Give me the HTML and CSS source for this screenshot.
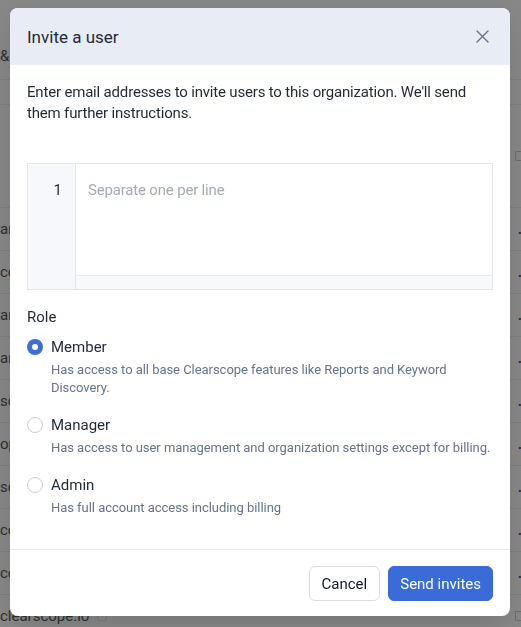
FILE: index.html
```html
<!DOCTYPE html>
<html lang="en">
<head>
<meta charset="utf-8">
<title>Invite a user</title>
<link rel="stylesheet" href="styles.css">
</head>
<body>
<div class="page">
  <div class="bg-head"><span class="frag">&amp;</span></div>
  <div class="bg-sub"></div>
  <div class="bg-gap"><span class="box"></span></div>
  <div class="bg-row first"></div>
  <div class="bg-row"><span class="frag">ar</span><span class="dot">.</span></div>
  <div class="bg-row"><span class="frag">co</span><span class="dot">.</span></div>
  <div class="bg-row"><span class="frag">ar</span><span class="dot">.</span></div>
  <div class="bg-row"><span class="frag">ar</span><span class="dot">.</span></div>
  <div class="bg-row"><span class="frag">sc</span><span class="dot">.</span></div>
  <div class="bg-row"><span class="frag">op</span><span class="dot">.</span></div>
  <div class="bg-row"><span class="frag">sc</span><span class="dot">.</span></div>
  <div class="bg-row"><span class="frag">co</span><span class="dot">.</span></div>
  <div class="bg-row"><span class="frag">co</span><span class="dot">.</span></div>
  <div class="bg-row"><span class="frag">clearscope.io <span class="cb"></span></span><span class="box"></span></div>
</div>

<div class="modal" role="dialog" aria-labelledby="modal-title">
  <div class="modal-header">
    <h2 id="modal-title" class="modal-title">Invite a user</h2>
    <button class="close-btn" aria-label="Close">
      <svg width="13" height="13" viewBox="0 0 13 13" fill="none" stroke="#64748b" stroke-width="1.4" stroke-linecap="round">
        <path d="M1 1 L12 12 M12 1 L1 12"/>
      </svg>
    </button>
  </div>
  <div class="modal-body">
    <p class="intro">Enter email addresses to invite users to this organization. We'll send them further instructions.</p>
    <div class="editor">
      <div class="gutter">1</div>
      <div class="editor-main">
        <textarea class="editor-input" placeholder="Separate one per line"></textarea>
        <div class="editor-scroll"></div>
      </div>
    </div>
    <div class="role-label">Role</div>
    <div class="options">
      <label class="option">
        <span class="radio checked"></span>
        <span class="opt-text">
          <span class="opt-name">Member</span>
          <span class="opt-desc">Has access to all base Clearscope features like Reports and Keyword Discovery.</span>
        </span>
      </label>
      <label class="option">
        <span class="radio"></span>
        <span class="opt-text">
          <span class="opt-name">Manager</span>
          <span class="opt-desc">Has access to user management and organization settings except for billing.</span>
        </span>
      </label>
      <label class="option">
        <span class="radio"></span>
        <span class="opt-text">
          <span class="opt-name">Admin</span>
          <span class="opt-desc">Has full account access including billing</span>
        </span>
      </label>
    </div>
  </div>
  <div class="modal-footer">
    <button class="btn btn-secondary">Cancel</button>
    <button class="btn btn-primary">Send invites</button>
  </div>
</div>
</body>
</html>
```

FILE: styles.css
```css
* { box-sizing: border-box; }

html, body {
  margin: 0;
  padding: 0;
  height: 100%;
}

body {
  font-family: Roboto, "Noto Sans", "Liberation Sans", sans-serif;
  background: #888888;
  color: #1f2937;
  overflow: hidden;
}

/* dimmed page behind the dialog */
.page {
  display: flex;
  flex-direction: column;
  color: #2f2f2f;
  font-size: 15px;
}

.bg-head {
  height: 80px;
  border-bottom: 1px solid #7e7e7e;
  display: flex;
  align-items: flex-end;
  padding-bottom: 14px;
}

.bg-sub {
  height: 25px;
  border-bottom: 1px solid #7e7e7e;
}

.bg-gap {
  height: 59px;
  display: flex;
  justify-content: flex-end;
  align-items: flex-start;
  padding-top: 46px;
}

.bg-row {
  height: 43px;
  border-top: 1px solid #7e7e7e;
  display: flex;
  align-items: center;
  justify-content: space-between;
}

.bg-row.first {
  border-top: none;
}

.frag {
  display: inline-flex;
  align-items: center;
  gap: 8px;
  white-space: nowrap;
}

.cb {
  display: inline-block;
  width: 10px;
  height: 10px;
  border: 1px solid #7a7a7a;
  border-radius: 2px;
}

.dot {
  margin-right: -1px;
  font-weight: 700;
}

.box {
  width: 6px;
  height: 10px;
  border: 1px solid #6e6e6e;
  border-right: none;
  border-radius: 2px 0 0 2px;
}

/* dialog */
.modal {
  position: fixed;
  left: 10px;
  top: 8px;
  width: 500px;
  height: 608px;
  background: #ffffff;
  border-radius: 8px;
  overflow: hidden;
  display: flex;
  flex-direction: column;
  box-shadow: 0 10px 30px rgba(0, 0, 0, 0.12);
}

.modal-header {
  height: 57px;
  flex: none;
  background: #e8edf5;
  display: flex;
  align-items: center;
  justify-content: space-between;
  padding: 0 21px 0 17px;
}

.modal-title {
  margin: 0;
  font-size: 17px;
  font-weight: 400;
  line-height: 24px;
  color: #1e293b;
}

.close-btn {
  width: 13px;
  height: 13px;
  padding: 0;
  border: none;
  background: none;
  display: flex;
}

.modal-body {
  flex: 1;
  padding: 17px 17px 32px;
  display: flex;
  flex-direction: column;
}

.intro {
  margin: 0;
  font-size: 15px;
  line-height: 21px;
  letter-spacing: -0.18px;
  color: #1f2937;
}

.editor {
  margin-top: 39px;
  height: 127px;
  flex: none;
  border: 1px solid #e3e7ed;
  display: flex;
}

.gutter {
  width: 48px;
  flex: none;
  background: #f6f8fb;
  border-right: 1px solid #e3e7ed;
  text-align: right;
  padding: 16px 13px 0 0;
  font-size: 15px;
  line-height: 21px;
  color: #1f2937;
}

.editor-main {
  flex: 1;
  display: flex;
  flex-direction: column;
}

.editor-input {
  flex: 1;
  border: none;
  outline: none;
  resize: none;
  padding: 16px 12px 0;
  font-family: inherit;
  font-size: 15px;
  line-height: 21px;
  letter-spacing: -0.18px;
  color: #1f2937;
  background: #ffffff;
}

.editor-input::placeholder {
  color: #a4abb6;
}

.editor-scroll {
  height: 14px;
  flex: none;
  background: #f8f9fa;
  border-top: 1px solid #e3e7ed;
}

.role-label {
  margin-top: 17px;
  font-size: 15px;
  line-height: 21px;
  color: #1f2937;
}

.options {
  margin-top: 8px;
  display: flex;
  flex-direction: column;
  gap: 17px;
}

.option {
  display: grid;
  grid-template-columns: 16px 1fr;
  column-gap: 8px;
}

.radio {
  width: 16px;
  height: 16px;
  margin-top: 3px;
  border-radius: 50%;
  border: 1px solid #c9ced6;
  background: #ffffff;
}

.radio.checked {
  border: 5px solid #3a6fd8;
}

.opt-text {
  display: flex;
  flex-direction: column;
}

.opt-name {
  font-size: 15px;
  line-height: 22px;
  color: #1f2937;
}

.opt-desc {
  margin-top: 3px;
  font-size: 13px;
  line-height: 18px;
  letter-spacing: -0.04px;
  color: #64748b;
}

.modal-footer {
  flex: none;
  border-top: 1px solid #e5e8ee;
  padding: 16px 17px;
  display: flex;
  justify-content: flex-end;
  gap: 8px;
}

.btn {
  height: 35px;
  border-radius: 6px;
  font-family: inherit;
  font-size: 15px;
  padding: 0 12px;
}

.btn-secondary {
  background: #ffffff;
  border: 1px solid #dadee4;
  color: #111827;
}

.btn-primary {
  background: #3a6bd9;
  border: 1px solid #3a6bd9;
  color: #ffffff;
  padding: 0 11px;
}
```
